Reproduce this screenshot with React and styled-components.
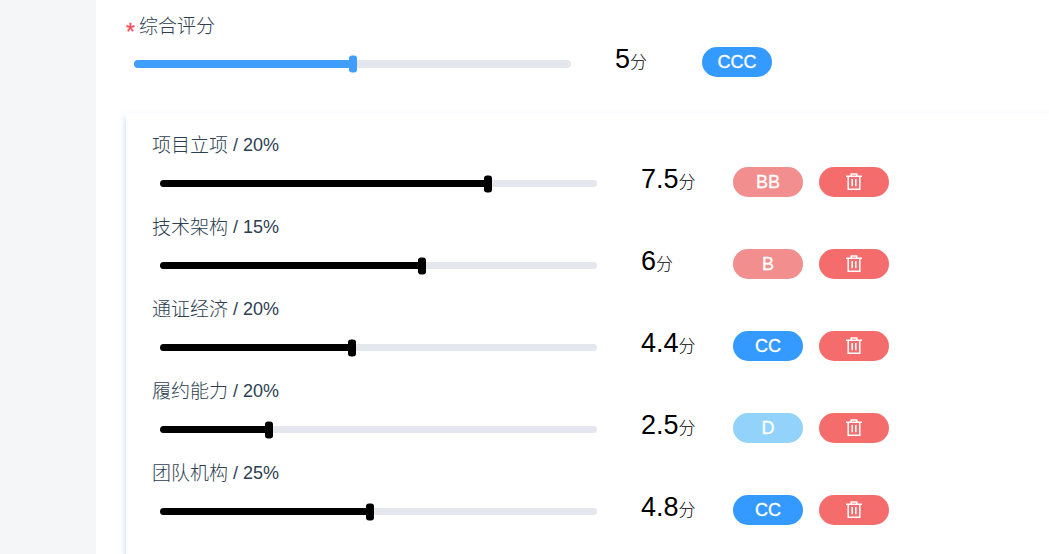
import React, { useState } from "react";
import styled, { createGlobalStyle } from "styled-components";

const GlobalStyle = createGlobalStyle`
  *, *::before, *::after { box-sizing: border-box; }
  body {
    margin: 0;
    background: #fff;
    color: #2c3e50;
    font-family: "Liberation Sans", "Noto Sans CJK SC", sans-serif;
    overflow-x: hidden;
  }
`;

const Page = styled.div`
  display: grid;
  grid-template-columns: 96px minmax(0, 1fr);
  height: 100vh;
  overflow: hidden;
`;

const Sidebar = styled.aside`
  background: #f5f6f8;
`;

const Main = styled.main`
  display: flex;
  flex-direction: column;
  padding: 11px 0 0 30px;
`;

const Panel = styled.section`
  flex: 1;
  padding: 17px 0 16px 26px;
  box-shadow: 0 4px 7px rgba(64, 140, 255, 0.35);
`;

const Item = styled.div`
  margin-bottom: ${(p) => (p.$overall ? "36px" : "15px")};
`;

const Label = styled.label`
  display: flex;
  align-items: center;
  height: 30px;
  margin-bottom: ${(p) => (p.$overall ? "6px" : "7px")};
  font-size: 18px;
  line-height: 30px;
  white-space: pre;
`;

const Name = styled.span`
  padding-top: 2px;
  font-size: 19px;
  font-weight: 300;
`;

const Required = styled.span`
  padding-top: 12px;
  margin-right: 4px;
  font-size: 23px;
  color: #ff4d5d;
  -webkit-text-stroke: 0.3px #ff4d5d;
`;

const Controls = styled.div`
  display: grid;
  grid-template-columns: minmax(120px, 437px) ${(p) => (p.$overall ? "99px" : "104px")} 70px 70px;
  grid-template-rows: 30px;
  column-gap: 16px;
  align-items: center;
  padding-left: 8px;
`;

const Rail = styled.div`
  position: relative;
  height: ${(p) => (p.$overall ? "8px" : "7px")};
  margin-top: ${(p) => (p.$overall ? "4px" : "3px")};
  border-radius: 4px;
  background: #e4e7ed;
`;

const Fill = styled.div`
  height: 100%;
  border-radius: 4px 0 0 4px;
  background: ${(p) => p.$color};
`;

const Range = styled.input`
  appearance: none;
  position: absolute;
  top: 50%;
  left: -4px;
  width: calc(100% + 8px);
  height: 17px;
  margin: 0;
  background: transparent;
  transform: translateY(-50%);
  cursor: pointer;

  &::-webkit-slider-thumb {
    appearance: none;
    width: 8px;
    height: 17px;
    border-radius: 3px;
    background: ${(p) => p.$color};
  }
`;

const Score = styled.output`
  display: flex;
  align-items: baseline;
  height: 30px;
  margin-left: 28px;
  color: #000;
  font-size: 27px;
  line-height: 24px;
  white-space: nowrap;
`;

const Unit = styled.small`
  font-size: 17px;
  font-weight: 300;
  line-height: 16px;
`;

const Pill = styled.button`
  display: flex;
  align-items: center;
  justify-content: center;
  width: 70px;
  height: 30px;
  padding: 0;
  border: 0;
  border-radius: 15px;
  background: ${(p) => p.$color};
  color: #fff;
  font: 18px "Liberation Sans", sans-serif;
  -webkit-text-stroke: 0.3px #fff;
  cursor: pointer;
`;

const tones = { CCC: "#359aff", CC: "#359aff", BB: "#f28e8e", B: "#f28e8e", D: "#93d2fa" };

const criteria = [
  { id: "project", name: "项目立项", weight: "20%", score: 7.5, grade: "BB" },
  { id: "tech", name: "技术架构", weight: "15%", score: 6, grade: "B" },
  { id: "token", name: "通证经济", weight: "20%", score: 4.4, grade: "CC" },
  { id: "delivery", name: "履约能力", weight: "20%", score: 2.5, grade: "D" },
  { id: "team", name: "团队机构", weight: "25%", score: 4.8, grade: "CC" },
];

function TrashIcon() {
  return (
    <svg width="18" height="18" viewBox="0 0 18 18" fill="none" stroke="#fff" strokeWidth="1.5" aria-hidden="true">
      <path d="M1 3.25H17M6.25 3.25V1H11.75V3.25M3.2 3.25V16.25H14.8V3.25M7.2 6V13.2M10.8 6V13.2" />
    </svg>
  );
}

function RatingSlider({ id, value, onChange, color, overall }) {
  return (
    <Rail $overall={overall}>
      <Fill $color={color} style={{ width: `${value * 10}%` }} />
      <Range
        id={id}
        type="range"
        min="0"
        max="10"
        step="0.1"
        value={value}
        $color={color}
        onChange={(e) => onChange(Number(e.target.value))}
      />
    </Rail>
  );
}

function RatingRow({ item, overall, onRemove }) {
  const [value, setValue] = useState(item.score);
  return (
    <Item $overall={overall}>
      <Label htmlFor={item.id} $overall={overall}>
        {overall && <Required>*</Required>}
        <Name>{item.name}</Name>
        {item.weight && ` / ${item.weight}`}
      </Label>
      <Controls $overall={overall}>
        <RatingSlider
          id={item.id}
          value={value}
          onChange={setValue}
          color={overall ? "#409eff" : "#000"}
          overall={overall}
        />
        <Score htmlFor={item.id}>
          {value}
          <Unit>分</Unit>
        </Score>
        <Pill type="button" $color={tones[item.grade]}>{item.grade}</Pill>
        {onRemove && (
          <Pill type="button" $color="#f56c6c" aria-label="删除" onClick={onRemove}>
            <TrashIcon />
          </Pill>
        )}
      </Controls>
    </Item>
  );
}

export default function App() {
  const [items, setItems] = useState(criteria);
  return (
    <>
      <GlobalStyle />
      <Page>
        <Sidebar />
        <Main>
          <RatingRow overall item={{ id: "overall", name: "综合评分", score: 5, grade: "CCC" }} />
          <Panel>
            {items.map((item) => (
              <RatingRow
                key={item.id}
                item={item}
                onRemove={() => setItems(items.filter((i) => i.id !== item.id))}
              />
            ))}
          </Panel>
        </Main>
      </Page>
    </>
  );
}
